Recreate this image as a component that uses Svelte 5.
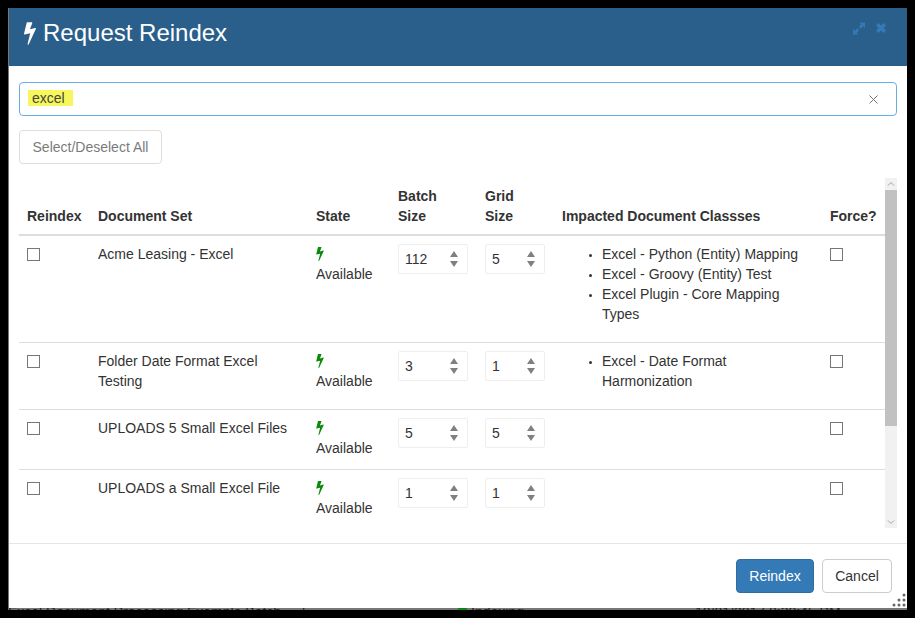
<script>
  // rows of the document set table
  const rows = [
    {
      name: "Acme Leasing - Excel",
      batch: 112,
      grid: 5,
      classes: [
        "Excel - Python (Entity) Mapping",
        "Excel - Groovy (Entity) Test",
        "Excel Plugin - Core Mapping Types",
      ],
    },
    {
      name: "Folder Date Format Excel Testing",
      batch: 3,
      grid: 1,
      classes: ["Excel - Date Format Harmonization"],
    },
    { name: "UPLOADS 5 Small Excel Files", batch: 5, grid: 5, classes: [] },
    { name: "UPLOADS a Small Excel File", batch: 1, grid: 1, classes: [] },
  ];

  const bolt =
    "M1333 566q18 20 7 44l-540 1157q-13 25-42 25-4 0-14-2-17-5-25.5-19t-4.500-30l197-808-406 101q-4 1-12 1-18 0-31-11-18-15-13-39l201-825q4-14 16-23t28-9h328q19 0 32 12.500t13 29.500q0 8-5 18l-171 463 396-98q8-2 12-2 19 0 34 15z";
</script>

<div class="modal">
  <header class="head">
    <h4 class="title">
      <svg class="title-bolt" viewBox="448 128 896 1664"><path d={bolt} /></svg>
      Request Reindex
    </h4>
    <div class="head-tools">
      <svg class="tool" width="12" height="13" viewBox="0 0 12 13">
        <path d="M6.500.500H12V6L10.200 4.200 7.700 6.700 5.800 4.800 8.300 2.300zM0 7l1.800 1.800 2.500-2.500 1.900 1.900-2.500 2.500L5.500 12.500H0z" />
      </svg>
      <svg class="tool" width="10" height="10" viewBox="0 0 10 10">
        <path d="M2.500 0 5 2.500 7.500 0 10 2.500 7.500 5 10 7.500 7.500 10 5 7.500 2.500 10 0 7.500 2.500 5 0 2.500z" />
      </svg>
    </div>
  </header>

  <div class="body">
    <div class="search">
      <span class="chip">excel</span>
      <svg class="clear" width="9" height="9" viewBox="0 0 9 9">
        <path d="M.5.500l8 8M8.500.500l-8 8" />
      </svg>
    </div>

    <button class="select-all" disabled>Select/Deselect All</button>

    <div class="scroll">
      <div class="viewport">
        <table>
          <thead>
            <tr>
              <th class="c-re">Reindex</th>
              <th class="c-doc">Document Set</th>
              <th class="c-state">State</th>
              <th class="c-batch">Batch<br />Size</th>
              <th class="c-grid">Grid<br />Size</th>
              <th class="c-imp">Impacted Document Classses</th>
              <th class="c-force">Force?</th>
            </tr>
          </thead>
          <tbody>
            {#each rows as row}
              <tr>
                <td><input type="checkbox" /></td>
                <td>{row.name}</td>
                <td>
                  <svg class="state-bolt" viewBox="448 128 896 1664"><path d={bolt} /></svg>
                  <div class="state-text">Available</div>
                </td>
                <td>
                  <div class="num batch">
                    {row.batch}
                    <svg width="8" height="16" viewBox="0 0 8 16">
                      <path d="M4 0l4 6H0zM0 10h8l-4 6z" />
                    </svg>
                  </div>
                </td>
                <td>
                  <div class="num grid">
                    {row.grid}
                    <svg width="8" height="16" viewBox="0 0 8 16">
                      <path d="M4 0l4 6H0zM0 10h8l-4 6z" />
                    </svg>
                  </div>
                </td>
                <td>
                  {#if row.classes.length}
                    <ul>
                      {#each row.classes as name}
                        <li>{name}</li>
                      {/each}
                    </ul>
                  {/if}
                </td>
                <td><input type="checkbox" /></td>
              </tr>
            {/each}
          </tbody>
        </table>
      </div>

      <!-- scrollbar -->
      <div class="bar">
        <svg class="arrow" width="12" height="12" viewBox="0 0 12 12"><path d="M3 7.500l3-3 3 3" /></svg>
        <div class="track"><div class="thumb"></div></div>
        <svg class="arrow" width="12" height="12" viewBox="0 0 12 12"><path d="M3 4.500l3 3 3-3" /></svg>
      </div>
    </div>
  </div>

  <footer class="foot">
    <button class="btn primary">Reindex</button>
    <button class="btn cancel">Cancel</button>
  </footer>

  <svg class="grip" width="14" height="14" viewBox="0 0 14 14">
    <circle cx="12" cy="2" r="1.500" />
    <circle cx="7" cy="7" r="1.500" />
    <circle cx="12" cy="7" r="1.500" />
    <circle cx="2" cy="12" r="1.500" />
    <circle cx="7" cy="12" r="1.500" />
    <circle cx="12" cy="12" r="1.500" />
  </svg>
</div>

<!-- the page behind the modal, almost fully covered -->
<div class="behind">
  <span class="b1">Excel Document Processing Example Batch</span>
  <span class="b2">5</span>
  <span class="b3"><i></i>Indexing</span>
  <span class="b4">10/01/2017 8:30:45 PM</span>
</div>

<style>
  :global(body) {
    background: #000;
    font-family: "Liberation Sans", Arial, sans-serif;
    font-size: 14px;
    line-height: 20px;
    color: #333;
  }

  .modal {
    position: relative;
    box-sizing: border-box;
    width: 899px;
    height: 600px;
    margin: 8px 0 0 8px;
    background: #fff;
    border-left: 1px solid #777;
    display: flex;
    flex-direction: column;
  }

  .head {
    height: 58px;
    flex: none;
    box-sizing: border-box;
    padding: 12px 21px 0 15px;
    background: #2b5f8b;
    display: flex;
    align-items: flex-start;
    justify-content: space-between;
  }

  .title {
    margin: 0;
    font-size: 24px;
    font-weight: 400;
    line-height: 26px;
    color: #fff;
    display: flex;
    align-items: center;
    gap: 7px;
  }

  .title-bolt {
    width: 12px;
    height: 23px;
    fill: #fff;
  }

  .head-tools {
    display: flex;
    gap: 11px;
    align-items: center;
    height: 16px;
  }

  .tool {
    fill: #337ab7;
  }

  .body {
    flex: 1;
    min-height: 0;
    padding: 16px 10px 15px 10px;
    border-bottom: 1px solid #e5e5e5;
    display: flex;
    flex-direction: column;
  }

  .search {
    height: 34px;
    flex: none;
    box-sizing: border-box;
    border: 1px solid #66afe9;
    border-radius: 4px;
    padding: 0 18px 0 8px;
    display: flex;
    align-items: center;
    justify-content: space-between;
  }

  .chip {
    background: #f7f75c;
    padding: 0 7px 0 4px;
    line-height: 16px;
    margin-bottom: 3px;
    width: 34px;
    color: #444;
  }

  .clear {
    stroke: #777;
    fill: none;
  }

  .select-all {
    align-self: flex-start;
    height: 34px;
    width: 143px;
    margin-top: 14px;
    padding: 0;
    background: #fff;
    border: 1px solid #ccc;
    border-radius: 4px;
    font: inherit;
    color: #333;
    opacity: 0.65;
  }

  .scroll {
    margin-top: 14px;
    height: 350px;
    display: flex;
  }

  .viewport {
    flex: 1;
    min-width: 0;
    overflow: hidden;
  }

  table {
    width: 866px;
    table-layout: fixed;
    border-collapse: collapse;
  }

  th {
    padding: 8px;
    text-align: left;
    vertical-align: bottom;
    border-bottom: 2px solid #ddd;
  }

  td {
    padding: 8px;
    vertical-align: top;
    border-top: 1px solid #ddd;
  }

  tbody tr:first-child td {
    border-top: 0;
  }

  .c-re { width: 55px; }
  .c-doc { width: 202px; }
  .c-state { width: 66px; }
  .c-batch { width: 71px; }
  .c-grid { width: 61px; }
  .c-imp { width: 252px; }
  .c-force { width: 47px; }

  input[type="checkbox"] {
    appearance: none;
    display: block;
    box-sizing: border-box;
    width: 13px;
    height: 13px;
    margin: 4px 0 0;
    background: #fff;
    border: 1px solid #767676;
  }

  .state-bolt {
    display: block;
    width: 8px;
    height: 14px;
    margin: 3px 0 3px;
    fill: #0a8a0a;
  }

  .state-text {
    margin-bottom: 3px;
  }

  .num {
    box-sizing: border-box;
    height: 30px;
    padding: 0 9px 0 6px;
    border: 1px solid #eee;
    border-radius: 2px;
    display: flex;
    align-items: center;
    justify-content: space-between;
  }

  .num svg {
    fill: #808080;
  }

  .batch { width: 70px; }
  .grid { width: 60px; }

  ul {
    margin: 0 0 10px;
    padding-left: 40px;
  }

  li::marker {
    font-size: 10px;
  }

  .bar {
    width: 12px;
    flex: none;
    background: #f1f1f1;
    display: flex;
    flex-direction: column;
  }

  .arrow {
    flex: none;
    fill: none;
    stroke: #a3a3a3;
  }

  .track {
    flex: 1;
  }

  .thumb {
    height: 236px;
    background: #c1c1c1;
  }

  .foot {
    flex: none;
    height: 64px;
    box-sizing: border-box;
    padding: 15px 15px 15px 0;
    display: flex;
    justify-content: flex-end;
    gap: 8px;
  }

  .btn {
    height: 34px;
    padding: 0;
    background: #fff;
    border: 1px solid #ccc;
    border-radius: 4px;
    font: inherit;
    color: #333;
  }

  .primary {
    width: 78px;
    background: #337ab7;
    border-color: #2e6da4;
    color: #fff;
  }

  .cancel {
    width: 70px;
  }

  .grip {
    position: absolute;
    right: 1px;
    bottom: 1px;
    fill: #666;
  }

  .behind {
    width: 899px;
    height: 2px;
    margin-left: 8px;
    box-sizing: border-box;
    background: #777;
    overflow: hidden;
    display: flex;
    font-size: 14px;
    line-height: 9px;
    color: #222;
  }

  .behind span {
    flex: none;
    white-space: nowrap;
  }

  .behind i {
    display: inline-block;
    width: 9px;
    height: 9px;
    margin-right: 4px;
    background: #0a8a0a;
  }

  .b1 { width: 294px; }
  .b2 { width: 156px; }
  .b3 { width: 237px; }
</style>
